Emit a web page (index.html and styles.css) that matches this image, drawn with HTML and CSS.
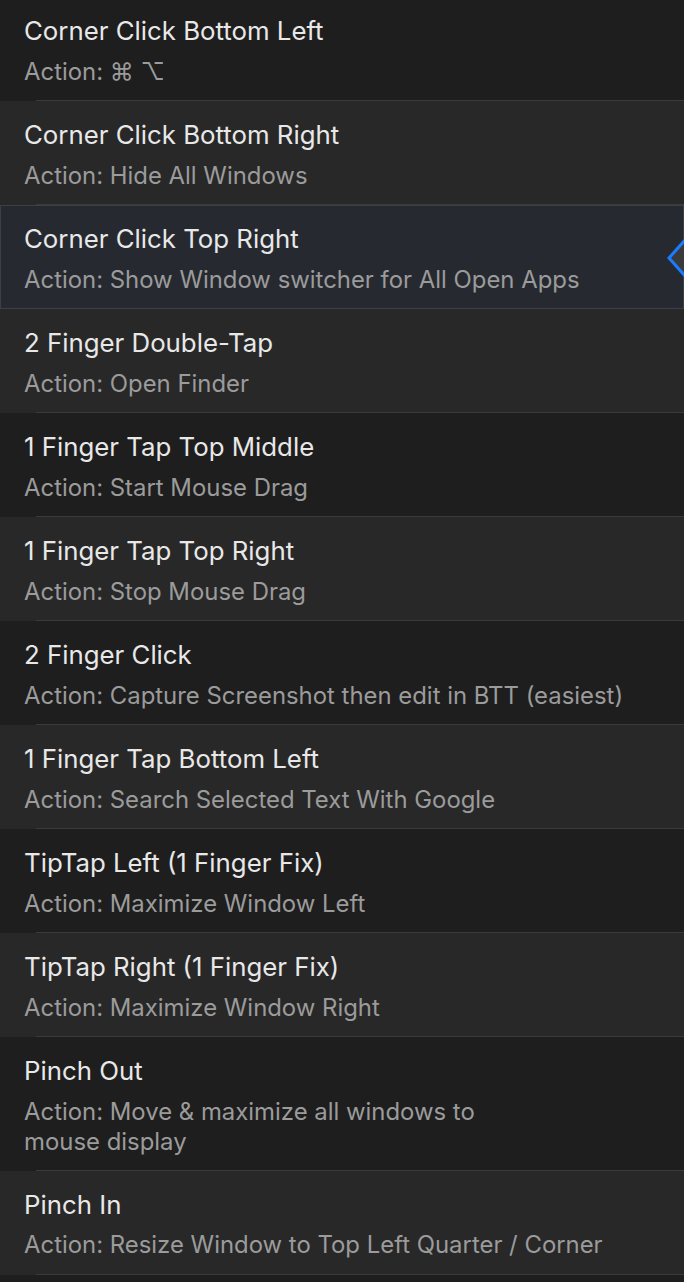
FILE: index.html
```html
<!DOCTYPE html>
<html>
<head>
<meta charset="utf-8">
<link rel="stylesheet" href="styles.css">
</head>
<body>
<div class="list">
  <div class="row dark"><div class="title">Corner Click Bottom Left</div><div class="sub">Action: ⌘ ⌥</div></div>
  <div class="row light"><div class="title">Corner Click Bottom Right</div><div class="sub">Action: Hide All Windows</div></div>
  <div class="row selected"><div class="title">Corner Click Top Right</div><div class="sub">Action: Show Window switcher for All Open Apps</div>
    <svg class="pointer" width="18" height="40" viewBox="0 0 18 40"><path d="M18 2 L2 20 L18 38" fill="#3a3a3c" stroke="#1a7cff" stroke-width="3"/></svg>
  </div>
  <div class="row light"><div class="title">2 Finger Double-Tap</div><div class="sub">Action: Open Finder</div></div>
  <div class="row dark"><div class="title">1 Finger Tap Top Middle</div><div class="sub">Action: Start Mouse Drag</div></div>
  <div class="row light"><div class="title">1 Finger Tap Top Right</div><div class="sub">Action: Stop Mouse Drag</div></div>
  <div class="row dark"><div class="title">2 Finger Click</div><div class="sub">Action: Capture Screenshot then edit in BTT (easiest)</div></div>
  <div class="row light"><div class="title">1 Finger Tap Bottom Left</div><div class="sub">Action: Search Selected Text With Google</div></div>
  <div class="row dark"><div class="title">TipTap Left (1 Finger Fix)</div><div class="sub">Action: Maximize Window Left</div></div>
  <div class="row light"><div class="title">TipTap Right (1 Finger Fix)</div><div class="sub">Action: Maximize Window Right</div></div>
  <div class="row dark"><div class="title">Pinch Out</div><div class="sub">Action: Move &amp; maximize all windows to<br>mouse display</div></div>
  <div class="row light"><div class="title">Pinch In</div><div class="sub">Action: Resize Window to Top Left Quarter / Corner</div></div>
</div>
</body>
</html>
```
FILE: styles.css
```css
html, body {
  margin: 0;
  padding: 0;
  background: #1e1e1e;
  overflow: hidden;
}
body {
  font-family: Inter, "Noto Sans", sans-serif;
  -webkit-font-smoothing: antialiased;
}
.list {
  display: flex;
  flex-direction: column;
  margin-top: -3px;
}
.row {
  position: relative;
  box-sizing: border-box;
  padding: 18px 24px 14px 24px;
  min-height: 104px;
}
.row::after {
  content: "";
  position: absolute;
  left: 36px;
  right: 0;
  bottom: 0;
  height: 1px;
  background: #3a3a3a;
}
.dark { background: #1e1e1e; }
.light { background: #282828; }
.selected {
  background: #262a30;
  border: 1px solid #3a4048;
  padding: 17px 23px 13px 23px;
}
.selected::after { display: none; }
.title {
  color: #e8e8e8;
  font-size: 25.8px;
  line-height: 32px;
  white-space: nowrap;
}
.sub {
  color: #9b9b9b;
  font-size: 23.9px;
  line-height: 30px;
  margin-top: 9.5px;
  white-space: nowrap;
}
.pointer {
  position: absolute;
  right: -2px;
  top: 32px;
}
```
